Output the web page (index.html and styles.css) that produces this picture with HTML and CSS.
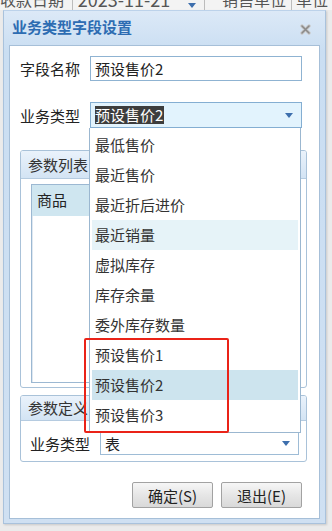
FILE: index.html
```html
<!DOCTYPE html>
<html lang="zh-CN">
<head>
  <meta charset="UTF-8">
  <title>业务类型字段设置</title>
  <link rel="stylesheet" href="styles.css">
</head>
<body>
  <div class="grid-head">
    <span class="cell c1">收款日期</span>
    <span class="cell c2">2023-11-21<i class="tri small"></i></span>
    <span class="cell c3">销售单位</span>
    <span class="cell c4">单位</span>
  </div>

  <div class="dialog">
    <div class="title-bar">
      <span class="title">业务类型字段设置</span>
      <svg class="close" width="11" height="11" viewBox="0 0 11 11">
        <path d="M2 2 L9 9 M9 2 L2 9" stroke="#c9c9c9" stroke-width="3.4" stroke-linecap="round"/>
        <path d="M2 2 L9 9 M9 2 L2 9" stroke="#8a8a8a" stroke-width="1.6" stroke-linecap="round"/>
      </svg>
    </div>

    <div class="dialog-body">
      <div class="form-row first">
        <label class="label">字段名称</label>
        <div class="text-input">预设售价2</div>
      </div>

      <div class="form-row second">
        <label class="label">业务类型</label>
        <div class="combo active">
          <span class="sel">预设售价2</span>
          <i class="tri"></i>
        </div>
      </div>

      <div class="panel list-panel">
        <div class="panel-head">参数列表</div>
        <div class="panel-content">
          <div class="param-list">
            <div class="param-row selected">商品</div>
          </div>
        </div>
      </div>

      <div class="panel def-panel">
        <div class="panel-head">参数定义</div>
        <div class="def-row">
          <label class="label">业务类型</label>
          <div class="combo small-combo">
            <span>表</span>
            <i class="tri"></i>
          </div>
        </div>
      </div>

      <div class="buttons">
        <button class="btn">确定(S)</button>
        <button class="btn">退出(E)</button>
      </div>

      <ul class="dropdown">
        <li>最低售价</li>
        <li>最近售价</li>
        <li>最近折后进价</li>
        <li class="hover">最近销量</li>
        <li>虚拟库存</li>
        <li>库存余量</li>
        <li>委外库存数量</li>
        <li>预设售价1</li>
        <li class="current">预设售价2</li>
        <li>预设售价3</li>
      </ul>

      <div class="mark"></div>
    </div>
  </div>
</body>
</html>
```

FILE: styles.css
```css
* {
  margin: 0;
  padding: 0;
  box-sizing: border-box;
}

body {
  width: 332px;
  height: 531px;
  overflow: hidden;
  background-color: #ebebeb;
  font-family: "Noto Sans CJK SC", "Microsoft YaHei", sans-serif;
  font-size: 15px;
  color: #222;
}

/* grid header peeking out above the dialog */
.grid-head {
  height: 10px;
  overflow: hidden;
  display: flex;
  background-color: #f3f3f3;
  color: #555;
  font-size: 16px;
  line-height: 20px;
}

.grid-head .cell {
  margin-top: -11px;
  padding: 0 4px;
  border-right: 1px solid #bcbcbc;
  white-space: nowrap;
  position: relative;
}

.grid-head .c1 { width: 75px; padding-left: 0; }
.grid-head .c2 { width: 136px; padding-left: 5px; font-size: 18px; }
.grid-head .c3 { width: 89px; padding-left: 17px; }
.grid-head .c4 { flex: 1; border-right: none; }

.grid-head .tri.small {
  position: absolute;
  right: 8px;
  top: 14px;
}

/* dialog frame */
.dialog {
  margin-left: 3px;
  width: 323px;
  height: 514px;
  background: linear-gradient(#dce9f7, #cadef2 40px, #cfe0f2);
  border: 1px solid #a9c2dc;
  border-top-color: #bcd2ea;
  padding: 0 5px 5px 5px;
  box-shadow: 1px 1px 2px rgba(0, 0, 0, 0.15);
}

.title-bar {
  height: 34px;
  display: flex;
  align-items: center;
  justify-content: space-between;
  padding: 0 9px 0 3px;
}

.title {
  font-weight: bold;
  font-size: 15px;
  color: #2d6cb2;
  letter-spacing: 0;
  margin-top: -3px;
}

.close {
  margin-top: 3px;
}

.dialog-body {
  position: relative;
  height: 474px;
  background-color: #fff;
  border: 1px solid #a6bfd8;
  padding: 10px 11px 0 10px;
}

/* form rows */
.form-row {
  display: flex;
  align-items: center;
}

.form-row .label {
  width: 70px;
  white-space: nowrap;
}

.form-row.second {
  margin-top: 21px;
}

.text-input {
  width: 212px;
  height: 25px;
  border: 1px solid #8fb3d2;
  padding-left: 4px;
  line-height: 23px;
  color: #222;
}

.combo {
  position: relative;
  width: 212px;
  height: 26px;
  border: 1px solid #84aed2;
  background-color: #e2f3fd;
  padding-left: 4px;
  display: flex;
  align-items: center;
}

.combo .sel {
  background-color: #3d3d3d;
  color: #fff;
  line-height: 18px;
  padding-right: 1px;
}

.tri {
  display: block;
  width: 0;
  height: 0;
  border-left: 4px solid transparent;
  border-right: 4px solid transparent;
  border-top: 5px solid #3e6fad;
}

.combo .tri {
  position: absolute;
  right: 8px;
  top: 10px;
}

/* panels */
.panel {
  border: 1px solid #a9c2d9;
  border-radius: 3px;
  margin-right: 1px;
}

.list-panel {
  margin-top: 22px;
  height: 238px;
}

.panel-head {
  height: 28px;
  line-height: 27px;
  padding-left: 7px;
  background: linear-gradient(#eaf2fb, #d3e4f4);
  border-bottom: 1px solid #b5cbe0;
  color: #333;
  border-radius: 2px 2px 0 0;
}

.panel-content {
  padding: 5px 10px 0 10px;
}

.param-list {
  height: 199px;
  border: 1px solid #9cb8d2;
  box-shadow: inset 1px 1px 0 #dfe8f1;
}

.param-row {
  height: 31px;
  line-height: 30px;
  padding-left: 5px;
}

.param-row.selected {
  background-color: #cfe6f0;
}

.def-panel {
  margin-top: 7px;
  height: 67px;
}

.def-panel .panel-head {
  height: 25px;
  line-height: 24px;
}

.def-row {
  display: flex;
  align-items: center;
  padding: 11px 0 0 9px;
}

.def-row .label {
  width: 70px;
}

.small-combo {
  width: 199px;
  height: 23px;
  background-color: #fff;
  border-color: #9ebcd6;
}

.small-combo .tri {
  top: 8px;
}

/* buttons */
.buttons {
  display: flex;
  justify-content: flex-end;
  gap: 8px;
  margin-top: 20px;
  padding-right: 6px;
}

.btn {
  width: 81px;
  height: 26px;
  font-family: inherit;
  font-size: 15px;
  color: #222;
  background: linear-gradient(#f6f6f6, #e6e6e6 50%, #d9d9d9);
  border: 1px solid #a2a2a2;
  border-radius: 2px;
}

/* open dropdown list of the combo */
.dropdown {
  position: absolute;
  left: 79px;
  top: 82px;
  width: 212px;
  height: 305px;
  list-style: none;
  background-color: #fff;
  border: 1px solid #9bb7d0;
  border-top: none;
  padding: 2px;
}

.dropdown li {
  height: 30px;
  line-height: 30px;
  padding-left: 3px;
  color: #333;
}

.dropdown li.hover {
  background-color: #e6f3f8;
}

.dropdown li.current {
  background-color: #cde4ee;
}

/* red annotation box */
.mark {
  position: absolute;
  left: 74px;
  top: 292px;
  width: 145px;
  height: 95px;
  border: 2px solid #ea2318;
  border-radius: 2px;
}
```
